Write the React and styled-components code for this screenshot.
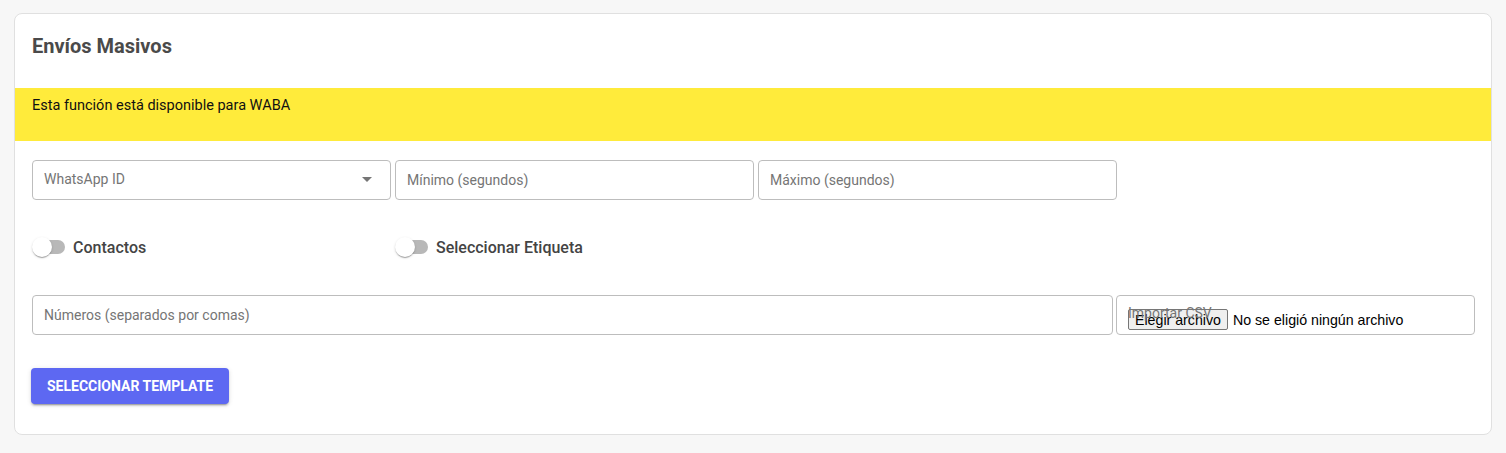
import React from 'react'
import styled, { createGlobalStyle } from 'styled-components'

const GlobalStyle = createGlobalStyle`
  body {
    margin: 0;
    background: #f7f7f7;
    font-family: Roboto, "Liberation Sans", sans-serif;
  }
`

const Page = styled.div`
  padding: 13px 14px;
`

const Card = styled.div`
  background: #fff;
  border: 1px solid #e0e0e0;
  border-radius: 8px;
  overflow: hidden;
`

const Header = styled.div`
  height: 74px;
  padding: 20px 17px 0;
  box-sizing: border-box;
`

const Title = styled.h2`
  margin: 0;
  font-size: 20px;
  line-height: 24px;
  font-weight: 700;
  color: #4a4a4a;
`

const Notice = styled.div`
  height: 53px;
  box-sizing: border-box;
  padding: 7px 17px 0;
  background: #ffeb3b;
  color: #111;
  font-size: 14.5px;
  line-height: 22px;
`

const Body = styled.div`
  padding: 19px 16px 30px 17px;
`

const Grid = styled.div`
  display: grid;
  grid-template-columns: ${(p) => p.$cols || 'repeat(3, 359px) 1fr'};
  column-gap: ${(p) => p.$gap || 4}px;
  margin-top: ${(p) => p.$top || 0}px;
`

const Field = styled.div`
  position: relative;
  height: 40px;
  box-sizing: border-box;
  border: 1px solid #bdbdbd;
  border-radius: 4px;
  display: flex;
  align-items: center;
  padding: 0 11px;
  font-size: 14px;
  color: #757575;
`

const Input = styled.input`
  border: none;
  outline: none;
  width: 100%;
  padding: 0;
  font: inherit;
  color: #333;
  background: transparent;
  &::placeholder {
    color: #757575;
  }
`

const SelectText = styled.span`
  flex: 1;
  margin-top: -2px;
`

const Caret = styled.span`
  width: 0;
  height: 0;
  margin: -2px 7px 0 0;
  border-left: 5px solid transparent;
  border-right: 5px solid transparent;
  border-top: 5px solid #757575;
`

const SwitchRow = styled.label`
  display: flex;
  align-items: center;
  height: 40px;
  gap: 8px;
  font-size: 16px;
  font-weight: 500;
  color: #444;
  cursor: pointer;
`

const Track = styled.span`
  position: relative;
  width: 32px;
  height: 14px;
  margin-left: ${(p) => p.$offset || 0}px;
  border-radius: 7px;
  background: #b8b8b8;
`

const Thumb = styled.span`
  position: absolute;
  left: -1px;
  top: -3px;
  width: 20px;
  height: 20px;
  border-radius: 50%;
  background: #fff;
  box-shadow: 0 2px 1px -1px rgba(0, 0, 0, 0.2), 0 1px 1px rgba(0, 0, 0, 0.14),
    0 1px 3px rgba(0, 0, 0, 0.12);
`

const FileBox = styled(Field)`
  align-items: flex-start;
  padding: 13px 11px 0;
`

const FileLabel = styled.span`
  position: absolute;
  left: 11px;
  top: 9px;
  z-index: 1;
  pointer-events: none;
  font-size: 14px;
  color: #757575;
`

const FilePicker = styled.span`
  display: flex;
  align-items: center;
  gap: 5px;
  font-family: "Liberation Sans", Arial, sans-serif;
  font-size: 14.2px;
  color: #000;
`

const FileButton = styled.span`
  height: 21px;
  box-sizing: border-box;
  padding: 0 6px;
  display: flex;
  align-items: center;
  background: #efefef;
  border: 1px solid #767676;
  border-radius: 2px;
`

const Primary = styled.button`
  margin-top: 33px;
  margin-left: -1px;
  height: 36px;
  padding: 0 16px;
  border: none;
  border-radius: 4px;
  background: #5d68f2;
  color: #fff;
  font-family: Roboto, sans-serif;
  font-size: 14px;
  font-weight: 700;
  text-transform: uppercase;
  box-shadow: 0 3px 1px -2px rgba(0, 0, 0, 0.2), 0 2px 2px rgba(0, 0, 0, 0.14),
    0 1px 5px rgba(0, 0, 0, 0.12);
  cursor: pointer;
`

const Switch = ({ label, offset }) => (
  <SwitchRow>
    <Track $offset={offset}>
      <Thumb />
    </Track>
    {label}
  </SwitchRow>
)

export default function App() {
  return (
    <Page>
      <GlobalStyle />
      <Card>
        <Header>
          <Title>Envíos Masivos</Title>
        </Header>
        <Notice>Esta función está disponible para WABA</Notice>
        <Body>
          <Grid>
            <Field>
              <SelectText>WhatsApp ID</SelectText>
              <Caret />
            </Field>
            <Field>
              <Input placeholder="Mínimo (segundos)" />
            </Field>
            <Field>
              <Input placeholder="Máximo (segundos)" />
            </Field>
          </Grid>
          <Grid $top={27}>
            <Switch label="Contactos" offset={1} />
            <Switch label="Seleccionar Etiqueta" offset={1} />
          </Grid>
          <Grid $top={28} $cols="1fr 359px" $gap={3}>
            <Field>
              <Input placeholder="Números (separados por comas)" />
            </Field>
            <FileBox>
              <FileLabel>Importar CSV</FileLabel>
              <FilePicker>
                <FileButton>Elegir archivo</FileButton>
                No se eligió ningún archivo
              </FilePicker>
            </FileBox>
          </Grid>
          <Primary>Seleccionar Template</Primary>
        </Body>
      </Card>
    </Page>
  )
}
